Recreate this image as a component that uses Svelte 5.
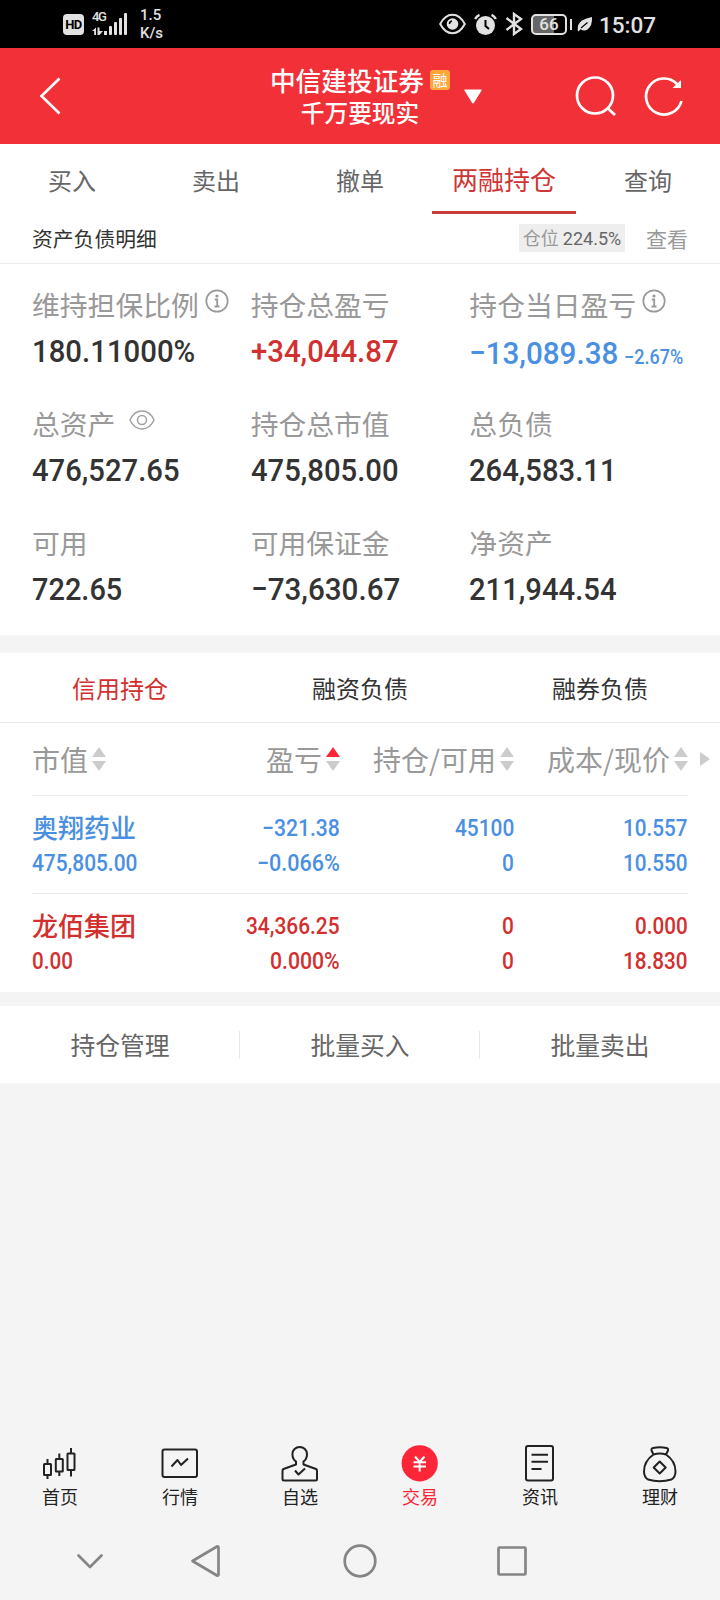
<script>
    const tabs = ["买入", "卖出", "撤单", "两融持仓", "查询"];
    const activeTab = "两融持仓";

    const assets = [
        { label: "维持担保比例", value: "180.11000%", icon: "info" },
        { label: "持仓总盈亏", value: "+34,044.87", color: "#d2302f" },
        {
            label: "持仓当日盈亏",
            value: "−13,089.38",
            rate: "−2.67%",
            color: "#4a90e2",
            icon: "info",
        },
        { label: "总资产", value: "476,527.65", icon: "eye" },
        { label: "持仓总市值", value: "475,805.00" },
        { label: "总负债", value: "264,583.11" },
        { label: "可用", value: "722.65" },
        { label: "可用保证金", value: "−73,630.67" },
        { label: "净资产", value: "211,944.54" },
    ];

    const segments = ["信用持仓", "融资负债", "融券负债"];
    const columns = ["市值", "盈亏", "持仓/可用", "成本/现价"];
    const sortedColumn = "盈亏";

    const holdings = [
        {
            name: "奥翔药业",
            marketValue: "475,805.00",
            color: "#4a90e2",
            cells: [
                ["−321.38", "−0.066%"],
                ["45100", "0"],
                ["10.557", "10.550"],
            ],
        },
        {
            name: "龙佰集团",
            marketValue: "0.00",
            color: "#d2302f",
            cells: [
                ["34,366.25", "0.000%"],
                ["0", "0"],
                ["0.000", "18.830"],
            ],
        },
    ];

    const actions = ["持仓管理", "批量买入", "批量卖出"];
    const navItems = ["首页", "行情", "自选", "交易", "资讯", "理财"];

    // Advance widths (em) of the condensed figures
    function numberWidth(text, size, spacing) {
        let width = 0;
        for (const ch of text) {
            if (ch === "," || ch === ".") width += 0.22;
            else if (ch === "%") width += 0.71;
            else if (ch === "−") width += 0.55;
            else width += 0.494;
            width += spacing / size;
        }
        return width * size;
    }
</script>

{#snippet number(text, size, color = "#333", spacing = 0)}
    {@const width = numberWidth(text, size, spacing)}
    <svg class="number" {width} height={size}>
        <text
            x="0"
            y={size * 0.86}
            font-size={size}
            fill={color}
            textLength={width}
            lengthAdjust="spacingAndGlyphs">{text}</text
        >
    </svg>
{/snippet}

<div class="screen">
    <div class="status">
        <span class="hd">HD</span>
        <div class="signal">
            <span class="net">4G</span>
            <svg width="36" height="24" viewBox="0 0 36 24" fill="#e2e2e2">
                <path d="M0 18 L4 14.500 V22 H2.200 V18 Z M5.500 14.500 H7.500 V18 H11 L7.500 22 H5.500 Z" />
                <rect x="12" y="18" width="3" height="4" />
                <rect x="17" y="13" width="3" height="9" rx="1" />
                <rect x="22" y="9" width="3" height="13" rx="1" />
                <rect x="27" y="5" width="3" height="17" rx="1" />
                <rect x="32" y="0" width="3" height="22" rx="1" />
            </svg>
        </div>
        <div class="speed"><span>1.5</span><span>K/s</span></div>

        <svg class="s-eye" width="27" height="22" viewBox="0 0 27 22" fill="none" stroke="#e2e2e2" stroke-width="2">
            <path d="M1.200 11 Q6 1.800 13.500 1.800 Q21 1.800 25.800 11 Q21 20.200 13.500 20.200 Q6 20.200 1.200 11 Z" />
            <circle cx="13.500" cy="11" r="5.800" fill="#e2e2e2" stroke="none" />
            <path d="M10.500 11 A3 3 0 0 1 13 8" stroke="#000" stroke-width="1.500" />
        </svg>
        <svg class="s-alarm" width="23" height="23" viewBox="0 0 23 23">
            <circle cx="11.500" cy="12.500" r="9.500" fill="#e2e2e2" />
            <path d="M1.200 6 Q2.500 3 5.500 1.800 M21.800 6 Q20.500 3 17.500 1.800" fill="none" stroke="#e2e2e2" stroke-width="2.500" />
            <path d="M11.500 7 V13 L15 16" fill="none" stroke="#000" stroke-width="2" />
        </svg>
        <svg class="s-bt" width="19" height="24" viewBox="0 0 19 24" fill="none" stroke="#e2e2e2" stroke-width="2.400">
            <path d="M1.500 6 L16 17 L9 22 V2 L16 7 L1.500 18" />
        </svg>
        <div class="battery"><span>66</span></div>
        <i class="battery-tip"></i>
        <svg class="s-leaf" width="16" height="17" viewBox="0 0 16 17">
            <path d="M15 1 Q15.500 10 10.500 13.500 Q7 15.500 3.500 13.200 L1.500 15.500 L.7 14.500 Q0 8 5 4.500 Q9 2 15 1 Z" fill="#e2e2e2" />
            <path d="M4 12 L10.500 6.500" stroke="#000" stroke-width="1.100" />
        </svg>
        <span class="clock">15:07</span>
    </div>

    <header>
        <svg class="back" width="22" height="38" viewBox="0 0 22 38">
            <path d="M20.500 1.500 L2.500 19 L20.500 36.500" fill="none" stroke="#fff" stroke-width="2.600" />
        </svg>
        <div class="title">
            <div class="broker">中信建投证券<span class="margin-badge">融</span></div>
            <div>千万要现实</div>
        </div>
        <div class="tools">
            <svg class="caret" width="18" height="15" viewBox="0 0 18 15">
                <path d="M1 .5 H17 Q18 .5 17.500 1.500 L10 13.800 Q9 15 8 13.800 L.5 1.500 Q0 .5 1 .5 Z" fill="#fff" />
            </svg>
            <svg class="search" width="42" height="42" viewBox="0 0 42 42" fill="none" stroke="#fff" stroke-width="2.700">
                <circle cx="20" cy="20.500" r="18" />
                <path d="M32.500 33 L40 40" />
            </svg>
            <svg class="refresh" width="40" height="42" viewBox="0 0 40 42" fill="none" stroke="#fff" stroke-width="2.700">
                <path d="M33.500 9.500 A18 18 0 1 0 37.500 26" />
                <path d="M37 5 V13 H28.500 Z" fill="#fff" stroke="none" />
            </svg>
        </div>
    </header>

    <nav class="tabs">
        {#each tabs as tab}
            <div class:active={tab === activeTab}>{tab}</div>
        {/each}
    </nav>

    <div class="detail-bar">
        <span class="detail-title">资产负债明细</span>
        <span class="position">仓位 <b>224.5%</b></span>
        <span class="view">查看</span>
    </div>

    <section class="assets">
        {#each assets as item}
            <div class="asset">
                <div class="label">
                    {item.label}
                    {#if item.icon === "info"}
                        <svg class="info" width="24" height="24" viewBox="0 0 24 24">
                            <circle cx="12" cy="12" r="10.700" fill="none" stroke="#999" stroke-width="1.700" />
                            <circle cx="12" cy="7" r="1.600" fill="#999" />
                            <path d="M9.800 10.500 H12.200 V17.500 M9.500 17.500 H14.500" fill="none" stroke="#999" stroke-width="1.800" />
                        </svg>
                    {:else if item.icon === "eye"}
                        <svg class="eye" width="26" height="20" viewBox="0 0 26 20" fill="none" stroke="#a2a2a2" stroke-width="1.500">
                            <path d="M1 10 Q5 1 13 1 Q21 1 25 10 Q21 19 13 19 Q5 19 1 10 Z" />
                            <circle cx="13" cy="10" r="4.500" />
                        </svg>
                    {/if}
                </div>
                <div class="value" class:with-rate={item.rate}>
                    {@render number(item.value, 32, item.color, 0.7)}
                    {#if item.rate}
                        {@render number(item.rate, 20, item.color)}
                    {/if}
                </div>
            </div>
        {/each}
    </section>

    <section class="holdings">
        <div class="segments">
            {#each segments as segment, i}
                <div class:active={i === 0}>{segment}</div>
            {/each}
        </div>

        <div class="table">
            <div class="row head">
                {#each columns as column}
                    <div class="th">
                        {column}
                        <svg width="14" height="24" viewBox="0 0 14 24">
                            <path d="M7 0 L14 10 H0 Z" fill={column === sortedColumn ? "#fd2638" : "#ccc"} />
                            <path d="M7 24 L14 14 H0 Z" fill="#ccc" />
                        </svg>
                    </div>
                {/each}
                <svg class="more" width="10" height="14" viewBox="0 0 10 14">
                    <path d="M0 0 L10 7 L0 14 Z" fill="#ccc" />
                </svg>
            </div>
            {#each holdings as stock}
                <div class="row">
                    <div class="cell">
                        <span class="name" style:color={stock.color}>{stock.name}</span>
                        {@render number(stock.marketValue, 24, stock.color)}
                    </div>
                    {#each stock.cells as [top, bottom]}
                        <div class="cell">
                            {@render number(top, 24, stock.color)}
                            {@render number(bottom, 24, stock.color)}
                        </div>
                    {/each}
                </div>
            {/each}
        </div>
    </section>

    <div class="actions">
        {#each actions as action}
            <div>{action}</div>
        {/each}
    </div>

    <footer>
        {#each navItems as item, i}
            <div class="nav-item" class:active={item === "交易"}>
                <svg width="40" height="40" viewBox="0 0 40 40" fill="none" stroke="#222" stroke-width="2" stroke-linejoin="round">
                    {#if i === 0}
                        <path d="M7.500 16 V21 M7.500 32 V36 M19.300 10.500 V16 M19.300 28.500 V33 M31 5 V10.500 M31 27 V33.500" />
                        <rect x="4" y="21" width="7" height="11" rx=".5" />
                        <rect x="15.800" y="16" width="7" height="12.500" rx=".5" />
                        <rect x="27.500" y="10.500" width="7" height="16.500" rx=".5" />
                    {:else if i === 1}
                        <rect x="2.500" y="6.500" width="34.500" height="27.500" rx="2" />
                        <path d="M11.500 23.500 L17.500 17 L21 22 L28 15.500" />
                    {:else if i === 2}
                        <path d="M16 18.500 V21.500 L3.500 26 Q2.500 26.500 2.500 28 V36 Q2.500 37.500 4 37.500 H35.500 Q37 37.500 37 36 V28 Q37 26.500 36 26 L23.500 21.500 V18.500 Q27 16 27 11 A7.300 7 0 0 0 12.400 11 Q12.400 16 16 18.500 Z" />
                        <path d="M15 27.500 L18.500 31.500 L25 25.500" />
                    {:else if i === 3}
                        <circle cx="19.700" cy="20.300" r="18.100" fill="#fd2638" stroke="none" />
                        <path d="M15 13.500 L19.700 19 L24.500 13.500 M13.500 19.300 H26 M13.500 23.500 H26 M19.700 19 V28.500" stroke="#fff" />
                    {:else if i === 4}
                        <rect x="6" y="3" width="27" height="34.500" rx="2" />
                        <path d="M11.500 11.800 H28 M11.500 18.800 H28 M11.500 26 H21.500" />
                    {:else}
                        <path d="M13.500 11.500 L11.500 7.500 Q11 5.500 13 5 Q20 3.500 26.500 5 Q28.500 5.500 28 7.500 L26 11.500 Q20 9.500 13.500 11.500 Q4 18 4 28.500 Q4 34 8 36.500 Q19.500 40 31.500 36.500 Q35.500 34 35.500 28.500 Q35.500 18 26 11.500" />
                        <path d="M19.700 18.500 L25.700 24.500 L19.700 30.500 L13.700 24.500 Z" />
                    {/if}
                </svg>
                <span>{item}</span>
            </div>
        {/each}
    </footer>

    <div class="system-nav">
        <svg width="720" height="40" viewBox="0 0 720 40" fill="none" stroke="#858585" stroke-width="2.700" stroke-linecap="round" stroke-linejoin="round">
            <path d="M78.500 15.500 L90 27 L101.500 15.500" />
            <path d="M192.500 21 L217 6.500 Q218.500 6 218.500 7.500 V34.500 Q218.500 36 217 35.500 Z" />
            <circle cx="360" cy="21" r="15.300" />
            <rect x="498.500" y="7.500" width="27" height="27" rx="1" />
        </svg>
    </div>
</div>

<style>
    :global(body) {
        margin: 0;
        background: #f4f4f4;
    }

    .screen {
        width: 720px;
        height: 1600px;
        display: flex;
        flex-direction: column;
        background: #f4f4f4;
        font-family: "Noto Sans CJK SC", sans-serif;
        overflow: hidden;
    }

    svg {
        display: block;
        flex: none;
    }

    .number {
        overflow: visible;
        font-family: Roboto, sans-serif;
        font-weight: 500;
    }

    .status {
        height: 48px;
        display: flex;
        align-items: center;
        background: #000;
        color: #e2e2e2;
        font-family: Roboto, sans-serif;
        font-weight: 500;
    }

    .hd {
        width: 21px;
        height: 21px;
        margin: 1px 8px 0 63px;
        border-radius: 4px;
        background: #e2e2e2;
        color: #000;
        font-size: 13px;
        font-weight: 700;
        line-height: 21px;
        text-align: center;
        letter-spacing: -0.5px;
    }

    .signal {
        position: relative;
        width: 36px;
        padding-top: 2px;
    }

    .net {
        position: absolute;
        left: 0;
        top: -1px;
        font-size: 13px;
        line-height: 13px;
        letter-spacing: -1.5px;
    }

    .speed {
        margin-left: 12px;
        display: flex;
        flex-direction: column;
        font-size: 15px;
        line-height: 18px;
    }

    .s-eye {
        margin-left: auto;
    }

    .s-alarm {
        margin-left: 8px;
    }

    .s-bt {
        margin-left: 8px;
    }

    .battery {
        box-sizing: border-box;
        width: 36px;
        height: 21px;
        margin: 1px 3px 0 7px;
        border: 2px solid #e2e2e2;
        border-radius: 5px;
        background: linear-gradient(90deg, #666 66%, #000 66%);
        font-size: 17px;
        line-height: 17px;
        text-align: center;
    }

    .battery-tip {
        width: 2px;
        height: 11px;
        background: #e2e2e2;
    }

    .s-leaf {
        margin-left: 5px;
    }

    .clock {
        margin: 2px 64px 0 6px;
        font-size: 22.5px;
        font-weight: 500;
    }

    header {
        height: 96px;
        display: grid;
        grid-template-columns: 1fr auto 1fr;
        align-items: center;
        background: #f23037;
        color: #fff;
    }

    .back {
        margin-left: 39px;
    }

    .title {
        display: flex;
        flex-direction: column;
        align-items: center;
        font-size: 23.7px;
        font-weight: 500;
        line-height: 33px;
    }

    .broker {
        display: flex;
        align-items: center;
        font-size: 25.7px;
    }

    .margin-badge {
        width: 20px;
        height: 20px;
        margin-left: 6px;
        border-radius: 3px;
        background: #fba63a;
        font-size: 15px;
        font-weight: 400;
        line-height: 19px;
        text-align: center;
    }

    .tools {
        display: flex;
        align-items: center;
    }

    .caret {
        margin-left: 14px;
    }

    .search {
        margin-left: auto;
    }

    .refresh {
        margin: 0 36px 0 27px;
    }

    .tabs {
        height: 70px;
        display: flex;
        background: #fff;
    }

    .tabs div {
        flex: 1;
        box-sizing: border-box;
        border-bottom: 3px solid transparent;
        color: #666;
        font-size: 24px;
        line-height: 71px;
        text-align: center;
    }

    .tabs .active {
        border-color: #c83c3d;
        color: #cf3535;
        font-size: 26px;
        line-height: 70px;
    }

    .detail-bar {
        box-sizing: border-box;
        height: 50px;
        padding: 0 32px;
        display: flex;
        align-items: center;
        border-bottom: 1px solid #ebebeb;
        background: #fff;
    }

    .detail-title {
        margin-top: -1px;
        color: #333;
        font-size: 20.8px;
    }

    .position {
        width: 106px;
        height: 28px;
        margin: -1px 21px 0 auto;
        background: #eee;
        color: #999;
        font-size: 18px;
        line-height: 27px;
        text-align: center;
        white-space: nowrap;
    }

    .position b {
        font-family: Roboto, sans-serif;
        font-weight: 400;
        color: #666;
    }

    .view {
        margin-top: -1px;
        color: #999;
        font-size: 21px;
    }

    .assets {
        box-sizing: border-box;
        height: 371px;
        padding: 20px 32px 0;
        display: grid;
        grid-template-columns: repeat(3, 1fr);
        grid-auto-rows: 119px;
        background: #fff;
    }

    .label {
        height: 40px;
        margin-bottom: 2px;
        display: flex;
        align-items: center;
        color: #999;
        font-size: 27.8px;
        white-space: nowrap;
    }

    .info {
        margin: -6px 0 0 6px;
    }

    .eye {
        margin: -6px 0 0 14px;
    }

    .value {
        height: 48px;
        display: flex;
        align-items: center;
    }

    .with-rate {
        align-items: flex-end;
        box-sizing: border-box;
        gap: 5px;
        padding-bottom: 6px;
    }

    .with-rate .number + .number {
        margin-bottom: 1px;
    }

    .holdings {
        height: 339px;
        margin-top: 18px;
        background: #fff;
    }

    .segments {
        display: flex;
        height: 69px;
        border-bottom: 1px solid #ebebeb;
    }

    .segments div {
        flex: 1;
        color: #333;
        font-size: 24px;
        line-height: 70px;
        text-align: center;
    }

    .segments .active {
        color: #d2302f;
    }

    .table {
        margin: 0 32px;
    }

    .row {
        height: 97px;
        display: grid;
        grid-template-columns: 130px 178px 174px 174px;
        position: relative;
    }

    .row + .row + .row {
        border-top: 1px solid #ebebeb;
    }

    .head {
        height: 72px;
        align-items: center;
        border-bottom: 1px solid #ebebeb;
    }

    .th {
        display: flex;
        align-items: center;
        justify-content: flex-end;
        gap: 4px;
        color: #999;
        font-size: 28px;
        white-space: nowrap;
    }

    .th:first-child {
        justify-content: flex-start;
    }

    .more {
        position: absolute;
        right: -22px;
        top: 29px;
    }

    .cell {
        padding-top: 19px;
        display: flex;
        flex-direction: column;
        align-items: flex-end;
        gap: 11px;
    }

    .cell:first-child {
        align-items: flex-start;
    }

    .name {
        height: 24px;
        font-size: 26px;
        font-weight: 500;
        line-height: 24px;
    }

    .actions {
        height: 77px;
        margin-top: 14px;
        display: flex;
        align-items: center;
        background: #fff;
    }

    .actions div {
        flex: 1;
        height: 28px;
        color: #666;
        font-size: 24.8px;
        line-height: 26px;
        text-align: center;
    }

    .actions div + div {
        box-shadow: -1px 0 #e8e8e8;
    }

    footer {
        margin-top: auto;
        height: 97px;
        display: flex;
    }

    .nav-item {
        flex: 1;
        display: flex;
        flex-direction: column;
        align-items: center;
        color: #222;
        font-size: 18px;
        line-height: 27px;
    }

    .nav-item.active {
        color: #fd2638;
    }

    .system-nav {
        height: 60px;
    }
</style>
